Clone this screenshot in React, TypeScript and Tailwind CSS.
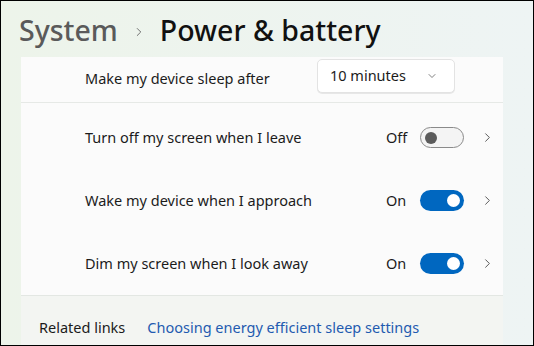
import { ChevronDown, ChevronRight } from 'lucide-react';

interface ToggleRow {
  label: string;
  on: boolean;
}

const rows: ToggleRow[] = [
  { label: 'Turn off my screen when I leave', on: false },
  { label: 'Wake my device when I approach', on: true },
  { label: 'Dim my screen when I look away', on: true },
];

function Toggle({ on }: { on: boolean }) {
  if (on) {
    return (
      <div className="flex h-[21px] w-[44px] items-center justify-end rounded-full bg-[#0067c0] pr-[4px]">
        <div className="h-[13px] w-[13px] rounded-full bg-white" />
      </div>
    );
  }
  return (
    <div className="flex h-[21px] w-[44px] items-center rounded-full border border-[#8a8a8a] bg-[#f4f4f4] pl-[4px]">
      <div className="h-[12px] w-[12px] rounded-full bg-[#5b5b5b]" />
    </div>
  );
}

export default function App() {
  return (
    <div
      className="flex h-[346px] w-[534px] flex-col overflow-hidden border border-black bg-gradient-to-r from-[#edf4ea] to-[#eef4f4] text-[#1b1b1b]"
      style={{ fontFamily: '"Noto Sans", "Open Sans", sans-serif' }}
    >
      <div className="flex h-[56px] shrink-0 items-center pl-[18px] pt-[2px] text-[28.5px] font-medium leading-none">
        <span className="text-[#5a5a5a]">System</span>
        <ChevronRight className="mx-[14px] mt-[4px] h-[14px] w-[14px] text-[#5f5f5f]" strokeWidth={1.5} />
        <span className="text-[#111]">Power &amp; battery</span>
      </div>

      <div className="ml-[20px] flex w-[482px] flex-1 flex-col">
        <div className="flex h-[46px] shrink-0 items-center justify-between border-b border-[#e6e9e6] bg-[#fbfbfb] pl-[64px] pr-[48px] text-[14.5px]">
          <span className="mb-[1px]">Make my device sleep after</span>
          <div className="mb-[8px] flex h-[34px] w-[138px] items-center justify-between rounded-[5px] border border-[#e3e3e3] bg-white pl-[12px] pr-[16px] shadow-[0_1px_0_rgba(0,0,0,0.08)]">
            <span>10 minutes</span>
            <ChevronDown className="h-[12px] w-[12px] text-[#555]" strokeWidth={1.5} />
          </div>
        </div>

        <div className="flex shrink-0 flex-col border-b border-[#e3e7e3] bg-[#fbfbfb] pt-[3px]">
          {rows.map((row) => (
            <div key={row.label} className="flex h-[63px] items-center pl-[64px] pr-[8px] text-[14.5px]">
              <span className="flex-1">{row.label}</span>
              <span className="w-[34px]">{row.on ? 'On' : 'Off'}</span>
              <Toggle on={row.on} />
              <ChevronRight className="ml-[16px] h-[15px] w-[15px] text-[#444]" strokeWidth={1.4} />
            </div>
          ))}
        </div>

        <div className="flex flex-1 items-start bg-[#f3f5f2] pl-[18px] pt-[21px] text-[14.5px]">
          <span className="mr-[22px]">Related links</span>
          <span className="text-[#1f5bb0]">Choosing energy efficient sleep settings</span>
        </div>
      </div>
    </div>
  );
}
